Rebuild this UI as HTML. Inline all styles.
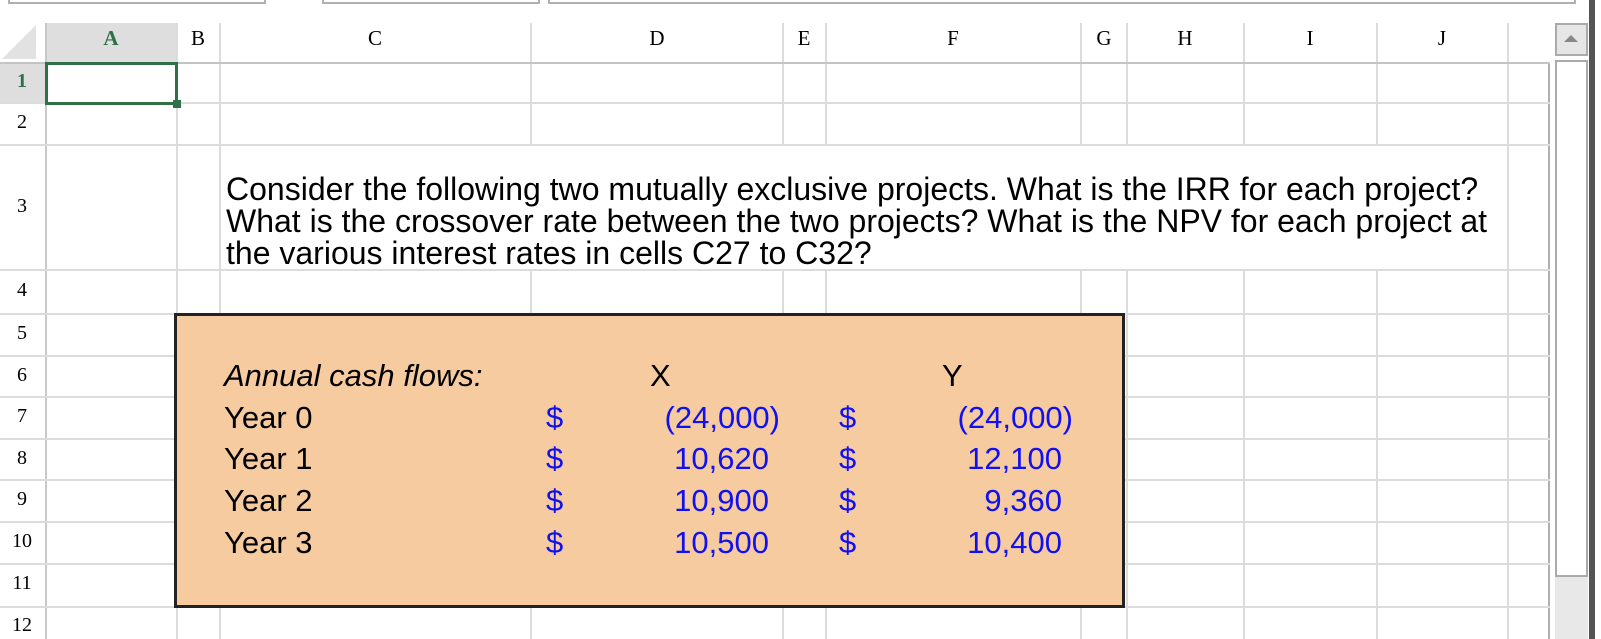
<!DOCTYPE html>
<html><head><meta charset="utf-8"><style>
body{margin:0;width:1601px;height:639px;overflow:hidden;background:#fff;position:relative;font-family:"Liberation Sans",Arial,sans-serif}
div{position:absolute;box-sizing:border-box}
.v{width:2px;background:#dcdcdc}
.h{height:2px;background:#dcdcdc}
.ch{top:26px;font-family:"Liberation Serif",serif;font-size:21px;transform:translateX(-50%);color:#000}
.rh{left:0;width:44px;text-align:center;font-family:"Liberation Serif",serif;font-size:20px;color:#000}
.t{font-size:31px;color:#000;white-space:nowrap;line-height:32px}
.b{color:#1010f0;font-size:31px;white-space:nowrap;line-height:32px}
.d{color:#1010f0;font-size:31px;line-height:32px}
</style></head><body>
<div style="left:8px;top:-10px;width:258px;height:14px;border:2px solid #b0b0b0"></div>
<div style="left:322px;top:-10px;width:218px;height:14px;border:2px solid #b0b0b0"></div>
<div style="left:548px;top:-10px;width:1028px;height:14px;border:2px solid #b0b0b0"></div>

<div style="left:46px;top:23px;width:131px;height:40px;background:#dedede"></div>
<div style="left:0;top:63px;width:46px;height:40px;background:#dedede"></div>
<div style="left:2px;top:25px;width:0;height:0;border-left:34px solid transparent;border-bottom:34px solid #e2e2e2"></div>

<div class="v" style="left:45px;top:23px;height:616px;background:#c8c8c8"></div>
<div class="v" style="left:176px;top:23px;height:616px"></div>
<div class="v" style="left:219px;top:23px;height:616px"></div>
<div class="v" style="left:530px;top:23px;height:122px"></div><div class="v" style="left:530px;top:270px;height:369px"></div>
<div class="v" style="left:782px;top:23px;height:122px"></div><div class="v" style="left:782px;top:270px;height:369px"></div>
<div class="v" style="left:825px;top:23px;height:122px"></div><div class="v" style="left:825px;top:270px;height:369px"></div>
<div class="v" style="left:1080px;top:23px;height:122px"></div><div class="v" style="left:1080px;top:270px;height:369px"></div>
<div class="v" style="left:1126px;top:23px;height:122px"></div><div class="v" style="left:1126px;top:270px;height:369px"></div>
<div class="v" style="left:1243px;top:23px;height:122px"></div><div class="v" style="left:1243px;top:270px;height:369px"></div>
<div class="v" style="left:1376px;top:23px;height:122px"></div><div class="v" style="left:1376px;top:270px;height:369px"></div>
<div class="v" style="left:1507px;top:23px;height:616px"></div>
<div class="v" style="left:1548px;top:63px;height:576px;background:#b0b0b0"></div>

<div class="h" style="left:0;top:62px;width:1550px;background:#c4c4c4"></div>
<div class="h" style="left:0;top:102px;width:1550px"></div>
<div class="h" style="left:0;top:144px;width:1550px"></div>
<div class="h" style="left:0;top:269px;width:1550px"></div>
<div class="h" style="left:0;top:313px;width:1550px"></div>
<div class="h" style="left:0;top:355px;width:1550px"></div>
<div class="h" style="left:0;top:396px;width:1550px"></div>
<div class="h" style="left:0;top:438px;width:1550px"></div>
<div class="h" style="left:0;top:479px;width:1550px"></div>
<div class="h" style="left:0;top:521px;width:1550px"></div>
<div class="h" style="left:0;top:563px;width:1550px"></div>
<div class="h" style="left:0;top:606px;width:1550px"></div>

<div class="ch" style="left:111px;color:#2f7047;font-weight:bold">A</div>
<div class="ch" style="left:198px">B</div>
<div class="ch" style="left:375px">C</div>
<div class="ch" style="left:657px">D</div>
<div class="ch" style="left:804px">E</div>
<div class="ch" style="left:953px">F</div>
<div class="ch" style="left:1104px">G</div>
<div class="ch" style="left:1185px">H</div>
<div class="ch" style="left:1310px">I</div>
<div class="ch" style="left:1442px">J</div>

<div class="rh" style="top:70px;color:#2f7047;font-weight:bold">1</div>
<div class="rh" style="top:111px">2</div>
<div class="rh" style="top:195px">3</div>
<div class="rh" style="top:279px">4</div>
<div class="rh" style="top:322px">5</div>
<div class="rh" style="top:364px">6</div>
<div class="rh" style="top:405px">7</div>
<div class="rh" style="top:447px">8</div>
<div class="rh" style="top:488px">9</div>
<div class="rh" style="top:530px">10</div>
<div class="rh" style="top:572px">11</div>
<div class="rh" style="top:614px">12</div>

<div style="left:45px;top:62px;width:133px;height:43px;border:3px solid #2f7047"></div>
<div style="left:173px;top:100px;width:8px;height:8px;background:#2f7047"></div>

<div class="t" style="left:226px;top:173px;font-size:32px;line-height:32px">Consider the following two mutually exclusive projects. What is the IRR for each project?<br>What is the crossover rate between the two projects? What is the NPV for each project at<br>the various interest rates in cells C27 to C32?</div>

<div style="left:174px;top:313px;width:951px;height:295px;background:#f6cb9f;border:3px solid #222"></div>
<div class="t" style="left:224px;top:360px;font-style:italic">Annual cash flows:</div>
<div class="t" style="left:224px;top:402px">Year 0</div>
<div class="t" style="left:224px;top:443px">Year 1</div>
<div class="t" style="left:224px;top:485px">Year 2</div>
<div class="t" style="left:224px;top:527px">Year 3</div>
<div class="t" style="left:650px;top:360px">X</div>
<div class="t" style="left:942px;top:360px">Y</div>

<div class="d" style="left:546px;top:402px">$</div>
<div class="d" style="left:546px;top:443px">$</div>
<div class="d" style="left:546px;top:485px">$</div>
<div class="d" style="left:546px;top:527px">$</div>
<div class="d" style="left:839px;top:402px">$</div>
<div class="d" style="left:839px;top:443px">$</div>
<div class="d" style="left:839px;top:485px">$</div>
<div class="d" style="left:839px;top:527px">$</div>

<div class="b" style="right:821px;top:402px">(24,000)</div>
<div class="b" style="right:832px;top:443px">10,620</div>
<div class="b" style="right:832px;top:485px">10,900</div>
<div class="b" style="right:832px;top:527px">10,500</div>
<div class="b" style="right:528px;top:402px">(24,000)</div>
<div class="b" style="right:539px;top:443px">12,100</div>
<div class="b" style="right:539px;top:485px">9,360</div>
<div class="b" style="right:539px;top:527px">10,400</div>

<div style="left:1555px;top:23px;width:33px;height:33px;background:#e6e6e6;border:2px solid #aaa"></div>
<div style="left:1564px;top:35px;width:0;height:0;border-left:7px solid transparent;border-right:7px solid transparent;border-bottom:7px solid #888"></div>
<div style="left:1555px;top:60px;width:33px;height:579px;background:#e8e8e8"></div>
<div style="left:1555px;top:60px;width:33px;height:517px;background:#fff;border:2px solid #aaa"></div>
<div style="left:1589px;top:0;width:6px;height:639px;background:#555"></div>
</body></html>
